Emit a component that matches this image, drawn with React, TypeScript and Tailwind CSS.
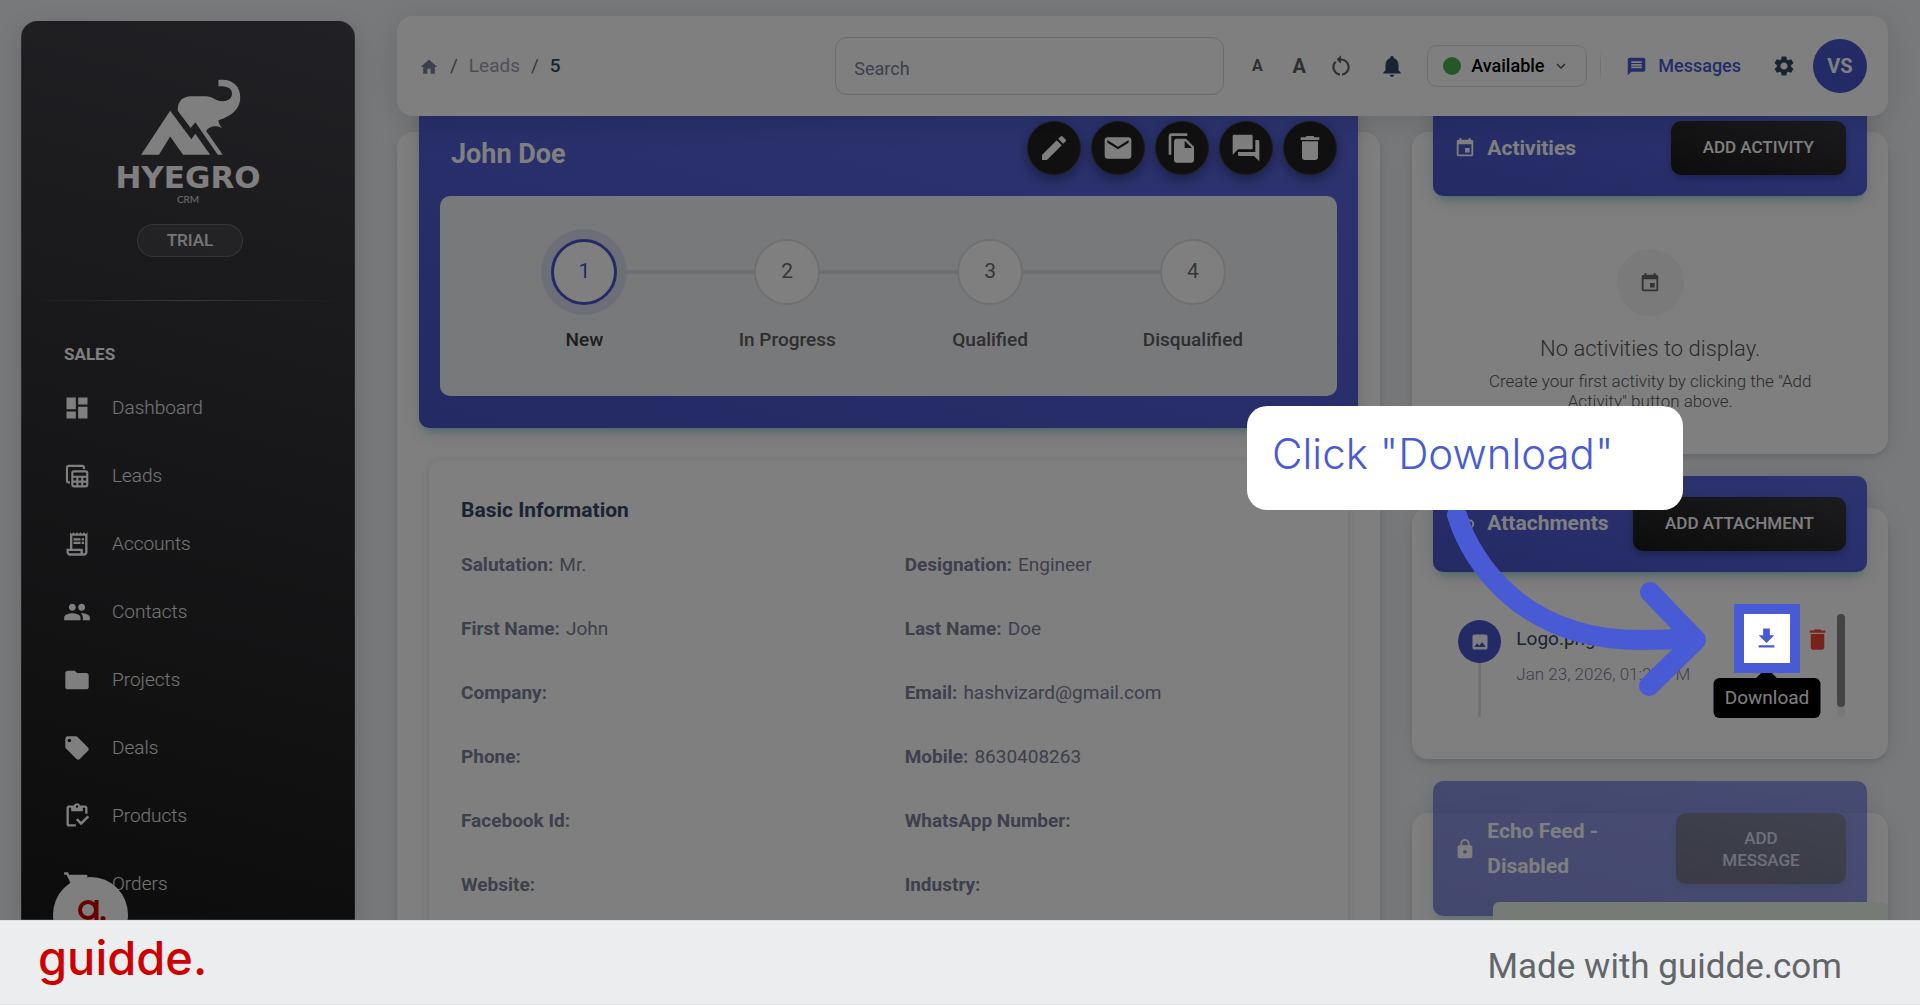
import React from "react";
import {
  MdDashboard,
  MdDelete,
  MdEdit,
  MdEmail,
  MdEvent,
  MdFileCopy,
  MdFolder,
  MdHome,
  MdImage,
  MdInsertLink,
  MdKeyboardArrowDown,
  MdLocalOffer,
  MdLock,
  MdMessage,
  MdNotifications,
  MdOutlineInventory,
  MdOutlineReceiptLong,
  MdPeople,
  MdQuestionAnswer,
  MdRestartAlt,
  MdSettings,
  MdShoppingCart,
} from "react-icons/md";

const blue =
  "rounded-[10px] bg-[linear-gradient(195deg,#5a68e0,#4654c8)] shadow-[0_4px_20px_rgba(0,0,0,0.14),0_7px_10px_-5px_rgba(0,187,212,0.4)]";
const card = "rounded-2xl bg-white shadow-[0_4px_6px_-1px_rgba(0,0,0,0.12),0_2px_24px_rgba(0,0,0,0.07)]";
const darkButton =
  "rounded-[10px] bg-[linear-gradient(195deg,#38383e,#191919)] text-[17px] font-medium text-white shadow-[0_3px_6px_rgba(0,0,0,0.25)]";

function LeadsIcon({ className }: { className?: string }) {
  return (
    <svg viewBox="0 0 24 24" className={className} fill="none" stroke="currentColor" strokeWidth="1.8" aria-hidden="true">
      <path d="M6 17.500H5a1.600 1.600 0 0 1-1.600-1.600V4.900A1.600 1.600 0 0 1 5 3.300h11.400a1.600 1.600 0 0 1 1.600 1.600V6" />
      <rect x="8" y="8" width="12.800" height="12.900" rx="1.400" />
      <path d="M8 12.600h12.800M8 16.800h12.800M12.300 13v8M16.500 13v8" strokeWidth="1.800" />
    </svg>
  );
}

function Elephant() {
  return (
    <svg viewBox="423 236 302 230" className="h-[76px] w-[100px] fill-white" role="img" aria-label="Hyegro">
      <path d="M423 465 511 332 575 418 587 402 632 465H550L511 410 477 465Z" />
      <path d="M534 332C532 305 548 288 575 288H618C640 288 648 303 670 303C688 303 698 294 698 280C698 264 684 257 657 258V239C700 234 723 258 723 292C723 325 700 347 657 361C657 370 662 377 668 385C650 375 630 378 620 393L670 465H655L587 367 573 384Z" />
    </svg>
  );
}

function DownloadIcon({ className }: { className?: string }) {
  return (
    <svg viewBox="0 0 24 24" className={className} fill="currentColor" aria-hidden="true">
      <path d="M19 9h-4V3H9v6H5l7 7 7-7zM5 18v2h14v-2H5z" />
    </svg>
  );
}

const menu = [
  { label: "Dashboard", Icon: MdDashboard },
  { label: "Leads", Icon: LeadsIcon },
  { label: "Accounts", Icon: MdOutlineReceiptLong },
  { label: "Contacts", Icon: MdPeople },
  { label: "Projects", Icon: MdFolder },
  { label: "Deals", Icon: MdLocalOffer },
  { label: "Products", Icon: MdOutlineInventory },
  { label: "Orders", Icon: MdShoppingCart },
];

function Sidebar() {
  return (
    <aside className="mt-[21px] ml-[21px] w-[334px] shrink-0 rounded-t-2xl border border-white/15 bg-[linear-gradient(195deg,#42424a,#191919)] pt-[57px] shadow-[0_8px_26px_rgba(0,0,0,0.15)]">
      <div className="flex flex-col items-center text-white">
        <div className="pl-[6px]">
          <Elephant />
        </div>
        <div className="mt-[9px] font-['DejaVu_Sans',sans-serif] text-[31px] leading-[26px] font-bold">HYEGRO</div>
        <div className="mt-[3px] font-[Lato,sans-serif] text-[10px] leading-3 text-white/80">CRM</div>
        <div className="mt-[19px] pl-1">
          <div className="flex h-[33px] w-[106px] items-center justify-center rounded-full border border-white/20 bg-white/8 text-[17px] font-medium text-white/90">
            TRIAL
          </div>
        </div>
      </div>
      <div className="mx-2 mt-[43px] h-px bg-linear-to-r from-transparent via-white/30 to-transparent" />
      <h2 className="mt-[41px] px-[42px] text-[17px] leading-6 font-bold text-white">SALES</h2>
      <nav className="mt-2">
        {menu.map(({ label, Icon }) => (
          <a key={label} href="#" className="flex h-[68px] items-center gap-[21px] px-[41px] text-white">
            <Icon className="size-7" />
            <span className="pt-px text-[19px] font-light text-white/90">{label}</span>
          </a>
        ))}
      </nav>
    </aside>
  );
}

function Header() {
  return (
    <header className="relative z-10 flex h-[100px] shrink-0 items-center rounded-2xl bg-white pr-[21px] pl-[22px] shadow-[0_6px_30px_rgba(0,0,0,0.12)]">
      <nav aria-label="Breadcrumb" className="flex items-center gap-[11px] pt-px text-[19px]">
        <a href="#" aria-label="Home" className="text-[#7b809a]">
          <MdHome className="size-5" />
        </a>
        <span className="text-[#6c757d]">/</span>
        <a href="#" className="text-[#9a9fb5]">Leads</a>
        <span className="text-[#6c757d]">/</span>
        <span className="font-medium text-[#344767]">5</span>
      </nav>
      <input
        type="search"
        aria-label="Search"
        placeholder="Search"
        className="ml-auto h-[58px] w-[389px] rounded-xl border border-[#d2d6da] px-[18px] pt-1 text-lg placeholder:text-[#7b809a]"
      />
      <div className="ml-3 flex text-[#5f5f66]">
        <button aria-label="Decrease text size" className="w-[42px] text-base font-bold">A</button>
        <button aria-label="Increase text size" className="w-[42px] text-xl font-bold">A</button>
        <button aria-label="Reset text size" className="flex w-[42px] items-center justify-center">
          <MdRestartAlt className="size-[26px]" />
        </button>
      </div>
      <button aria-label="Notifications" className="ml-[9px] flex w-[42px] justify-center text-[#344767]">
        <MdNotifications className="size-[26px]" />
      </button>
      <label className="relative ml-[14px] flex h-[42px] w-40 items-center rounded-[10px] border border-[#dcdcdc] pl-[15px]">
        <span className="size-[18px] shrink-0 rounded-full bg-[#4caf50]" />
        <select aria-label="Status" className="w-full appearance-none pl-[10px] text-lg font-medium text-black">
          <option>Available</option>
        </select>
        <MdKeyboardArrowDown className="pointer-events-none absolute right-4 size-[18px] text-[#555]" />
      </label>
      <div className="ml-[13px] h-8 w-px bg-linear-to-b from-transparent via-black/15 to-transparent" />
      <a href="#" className="ml-[25px] flex items-center gap-[11px] text-lg font-medium text-[#4a58d4]">
        <MdMessage className="size-[21px]" />
        Messages
      </a>
      <button aria-label="Settings" className="ml-[22px] flex w-[42px] justify-center text-[#344767]">
        <MdSettings className="size-6" />
      </button>
      <button className="ml-2 size-[54px] rounded-full bg-[#4654cc] text-xl font-bold text-white">VS</button>
    </header>
  );
}

const actions = [
  { label: "Edit", Icon: MdEdit },
  { label: "Email", Icon: MdEmail },
  { label: "Duplicate", Icon: MdFileCopy },
  { label: "Chat", Icon: MdQuestionAnswer },
  { label: "Delete", Icon: MdDelete },
];

const steps = ["New", "In Progress", "Qualified", "Disqualified"];

const fields: [string, string][] = [
  ["Salutation:", "Mr."],
  ["Designation:", "Engineer"],
  ["First Name:", "John"],
  ["Last Name:", "Doe"],
  ["Company:", ""],
  ["Email:", "hashvizard@gmail.com"],
  ["Phone:", ""],
  ["Mobile:", "8630408263"],
  ["Facebook Id:", ""],
  ["WhatsApp Number:", ""],
  ["Website:", ""],
  ["Industry:", ""],
];

function LeadCard() {
  return (
    <section className={`col-span-2 ${card}`}>
      <div className={`mx-[22px] -mt-8 px-[21px] pt-[21px] pb-8 ${blue}`}>
        <div className="flex items-center justify-between pl-[11px]">
          <h1 className="pt-3 text-[27px] font-bold text-white">John Doe</h1>
          <div className="flex gap-[10px]">
            {actions.map(({ label, Icon }) => (
              <button
                key={label}
                aria-label={label}
                className="flex size-[54px] items-center justify-center rounded-full border border-[#3a3a3a] bg-[#212121] text-white shadow-[0_4px_12px_rgba(0,0,0,0.4)]"
              >
                <Icon className="size-8" />
              </button>
            ))}
          </div>
        </div>
        <ol className="mt-[21px] grid h-[200px] grid-cols-4 rounded-[10px] bg-[#f0f2f5] px-[43px] pt-[43px]">
          {steps.map((step, i) => (
            <li key={step} className="flex flex-col items-center">
              <div className="flex w-full items-center">
                <span className={`h-1 flex-1 ${i === 0 ? "" : "bg-[#e0e0e0]"}`} />
                <span
                  className={`flex size-[66px] items-center justify-center rounded-full bg-white text-[21px] ${
                    i === 0
                      ? "border-3 border-[#4654cc] text-[#4654cc] shadow-[0_0_0_10px_rgba(70,84,204,0.12)]"
                      : "border-2 border-[#e0e0e0] text-[#6c6c6c]"
                  }`}
                >
                  {i + 1}
                </span>
                <span className={`h-1 flex-1 ${i === steps.length - 1 ? "" : "bg-[#e0e0e0]"}`} />
              </div>
              <span
                className={`mt-5 text-[19px] leading-[30px] font-medium ${i === 0 ? "text-[#3c3c3c]" : "text-[#5c5c5c]"}`}
              >
                {step}
              </span>
            </li>
          ))}
        </ol>
      </div>
      <div className="mx-8 mt-8 h-full rounded-xl bg-white px-8 pt-8 shadow-[0_2px_8px_rgba(0,0,0,0.16)]">
        <h2 className="text-[21px] leading-9 font-bold text-[#344767]">Basic Information</h2>
        <dl className="mt-[5px] grid grid-cols-2 gap-x-8 text-[19px] text-[#7b809a]">
          {fields.map(([label, value]) => (
            <div key={label} className="flex h-16 items-center gap-[6px]">
              <dt className="font-bold">{label}</dt>
              <dd>{value}</dd>
            </div>
          ))}
        </dl>
      </div>
    </section>
  );
}

function ActivitiesCard() {
  return (
    <section className={card}>
      <div className={`mx-[21px] -mt-8 flex items-center px-[21px] py-[21px] ${blue}`}>
        <MdEvent className="size-[22px] text-white" />
        <h2 className="ml-[11px] pt-px text-[21px] font-bold text-white">Activities</h2>
        <button className={`ml-auto h-[54px] px-8 ${darkButton}`}>ADD ACTIVITY</button>
      </div>
      <div className="flex flex-col items-center px-14 pt-[53px] pb-[42px] text-center">
        <span className="flex size-[67px] items-center justify-center rounded-full bg-[#f5f5f5]">
          <MdEvent className="size-[22px] text-[#666]" />
        </span>
        <p className="mt-[17px] text-[22px] leading-8 font-light text-[#555]">No activities to display.</p>
        <p className="mt-[6px] mb-px max-w-[340px] text-[17px] leading-5 font-light text-[#555]">
          Create your first activity by clicking the "Add Activity" button above.
        </p>
      </div>
    </section>
  );
}

function Callout() {
  return (
    <>
      <svg
        viewBox="0 0 270 200"
        className="absolute -top-26 right-[90px] z-50 h-[200px] w-[270px]"
        fill="none"
        stroke="#485ad4"
        strokeWidth="20"
        strokeLinecap="round"
        strokeLinejoin="round"
        aria-hidden="true"
      >
        <path d="M17 15C32 65 85 140 200 140C225 140 240 139 254 138" />
        <path d="M210 92 256 140 209 186" />
      </svg>
      <div className="absolute right-[117px] -top-[198px] z-50 h-[104px] w-[436px] rounded-[20px] bg-white px-[25px] pt-[22px] font-[Inter,sans-serif] text-[42px] leading-[52px] font-light whitespace-nowrap text-[#485ad4]">
        Click "Download"
      </div>
    </>
  );
}

function AttachmentsCard() {
  return (
    <section className={card}>
      <div className={`mx-[21px] -mt-8 flex items-center px-[21px] py-[21px] ${blue}`}>
        <MdInsertLink className="size-[22px] text-white" />
        <h2 className="ml-[11px] text-[21px] font-bold text-white">Attachments</h2>
        <button className={`ml-auto h-[54px] px-8 ${darkButton}`}>ADD ATTACHMENT</button>
      </div>
      <div className="px-[43px] py-[42px]">
        <div className="flex h-[103px]">
          <div className="mt-[6px] ml-[3px] flex w-[43px] flex-col items-center">
            <span className="flex size-[43px] shrink-0 items-center justify-center rounded-full bg-[#4654cc]">
              <MdImage className="size-5 text-white" />
            </span>
            <span className="w-[3px] flex-1 bg-[#dee2e6]" />
          </div>
          <div className="ml-[15px] flex-1 whitespace-nowrap">
            <p className="mt-[11px] text-[19px] leading-7 text-[#344767]">Logo.png</p>
            <p className="mt-[7px] text-[17px] leading-7 font-light text-[#7b809a]">Jan 23, 2026, 01:27 PM</p>
          </div>
          <div className="relative -mt-[10px] h-[69px] w-[66px]">
            <button
              aria-label="Download"
              className="absolute inset-0 z-50 flex items-center justify-center border-10 border-[#485ad4] bg-white text-[#485ad4]"
            >
              <DownloadIcon className="size-[27px]" />
            </button>
            <div
              role="tooltip"
              className="absolute top-[74px] left-1/2 z-20 flex h-10 w-[107px] -translate-x-1/2 items-center justify-center rounded-md bg-black text-[19px] text-white"
            >
              <span className="absolute -top-[7px] size-4 rotate-45 bg-black" />
              <span className="relative">Download</span>
            </div>
            <Callout />
          </div>
          <button aria-label="Delete attachment" className="mt-[11px] ml-1 h-7 text-[#f44335]">
            <MdDelete className="size-[27px]" />
          </button>
          <div className="ml-[6px] w-2 rounded-full bg-[#f1f1f1]">
            <div className="h-[93px] rounded-full bg-[#888]" />
          </div>
        </div>
      </div>
    </section>
  );
}

function EchoCard() {
  return (
    <section className={`relative h-[300px] ${card}`}>
      <div className={`mx-[21px] -mt-8 flex items-center px-[21px] pt-8 pb-8 opacity-65 ${blue}`}>
        <MdLock className="size-[22px] shrink-0 text-white" />
        <h2 className="ml-[11px] flex-1 text-[21px] leading-[35px] font-bold text-white">
          Echo Feed -<br />
          Disabled
        </h2>
        <button disabled className={`h-[71px] w-[170px] px-10 leading-[22px] opacity-70 ${darkButton}`}>
          ADD MESSAGE
        </button>
      </div>
      <div role="status" className="absolute top-[89px] right-0 h-20 w-[395px] rounded-md bg-[#edf7ed]" />
    </section>
  );
}

export default function App() {
  return (
    <div className="flex h-screen flex-col overflow-hidden font-[Roboto,sans-serif]">
      <div className="relative flex min-h-0 flex-1 overflow-hidden bg-[#f0f2f5]">
        <Sidebar />
        <main className="mt-4 mr-8 ml-[42px] flex min-w-0 flex-1 flex-col">
          <Header />
          <div className="mt-4 grid grid-cols-3 gap-8">
            <LeadCard />
            <div className="flex flex-col gap-[54px]">
              <ActivitiesCard />
              <AttachmentsCard />
              <EchoCard />
            </div>
          </div>
        </main>
        <button
          aria-label="Open guidde"
          className="absolute -bottom-8 left-[53px] z-30 size-[75px] rounded-full bg-white text-[#c00]"
        >
          <svg viewBox="0 0 75 75" fill="none" stroke="currentColor" strokeWidth="4" aria-hidden="true">
            <circle cx="35" cy="33" r="8" />
            <path d="M43.500 23V45C43.500 56 28 56 27 48" />
            <circle cx="50" cy="41.500" r="2.500" fill="currentColor" stroke="none" />
          </svg>
        </button>
        <div className="pointer-events-none absolute inset-0 z-40 bg-black/50" />
      </div>
      <footer className="flex h-[85px] shrink-0 items-center justify-between border-y border-[#dfe0e2] bg-[#ecedef] pr-[78px] pl-[38px]">
        <a href="#" className="pb-[10px] font-[Inter,sans-serif] text-[47px] leading-[60px] font-medium text-[#c00]">guidde.</a>
        <span className="pt-[9px] text-[35px] text-[#636669]">Made with guidde.com</span>
      </footer>
    </div>
  );
}
